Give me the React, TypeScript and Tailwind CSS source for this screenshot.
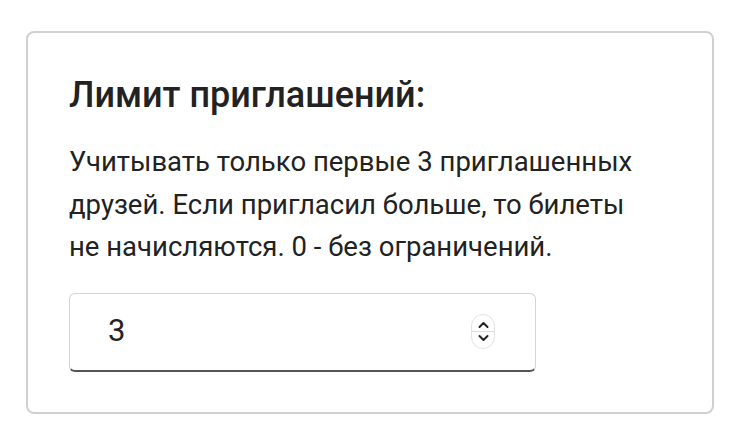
export default function App() {
  return (
    <div className="w-[742px] h-[444px] bg-white pt-[31px] pl-[26px] font-['Roboto',sans-serif] text-[#222]">
      <div className="w-[688px] h-[383px] rounded-[8px] border-2 border-[#d0d0d0] px-[41px] pt-[42px]">
        <h2 className="text-[36px] font-medium leading-[40px] text-[#222]">Лимит приглашений:</h2>
        <p className="mt-[26px] text-[27.5px] leading-[42.5px] text-[#222]">
          Учитывать только первые 3 приглашенных
          <br />
          друзей. Если пригласил больше, то билеты
          <br />
          не начисляются. 0 - без ограничений.
        </p>
        <div className="mt-[24px] w-[467px] h-[79px] rounded-[6px] border border-[#d4d4d4] border-b-2 border-b-[#555] flex items-center pl-[38px] pr-[40px]">
          <span className="flex-1 text-[31px] text-[#222]">3</span>
          <div className="w-[24px] h-[35px] rounded-full border border-[#e2e2e2] flex flex-col items-center justify-center">
            <svg width="13" height="11" viewBox="0 0 13 11" className="mb-[1px]">
              <path d="M2.5 8 L6.5 4 L10.5 8" fill="none" stroke="#222" strokeWidth="2" strokeLinecap="round" strokeLinejoin="round" />
            </svg>
            <div className="w-full h-px bg-[#ddd]" />
            <svg width="13" height="11" viewBox="0 0 13 11" className="mt-[1px]">
              <path d="M2.5 3 L6.5 7 L10.5 3" fill="none" stroke="#222" strokeWidth="2" strokeLinecap="round" strokeLinejoin="round" />
            </svg>
          </div>
        </div>
      </div>
    </div>
  );
}
